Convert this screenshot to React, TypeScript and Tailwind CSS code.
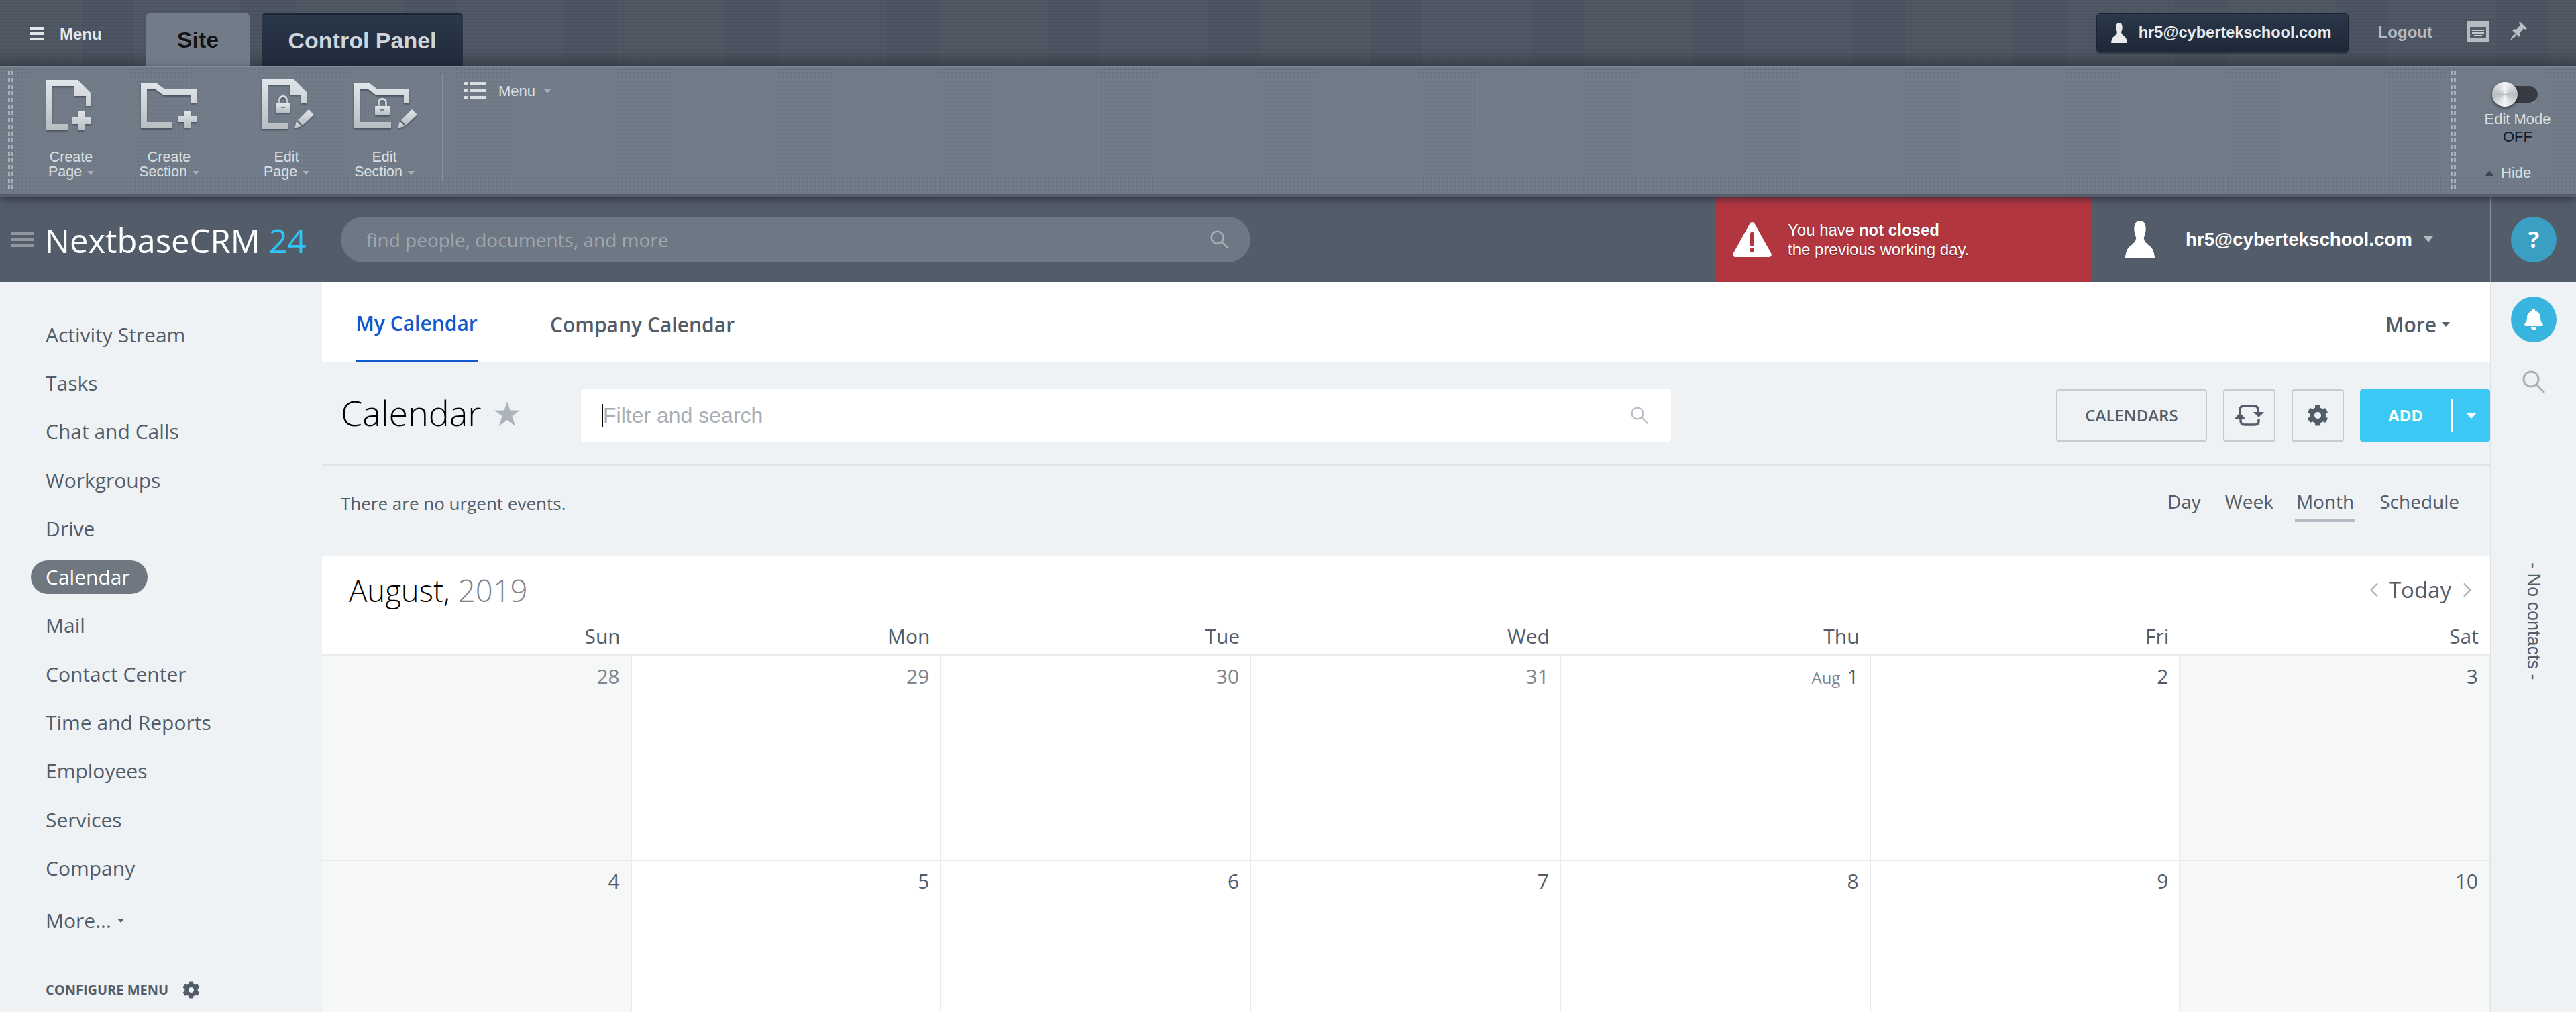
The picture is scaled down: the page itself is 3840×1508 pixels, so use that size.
import React from 'react';
import { FaBell, FaCog } from 'react-icons/fa';
import { ChevronLeft, ChevronRight } from 'lucide-react';

const sidebarItems = [
  'Activity Stream', 'Tasks', 'Chat and Calls', 'Workgroups', 'Drive', 'Calendar',
  'Mail', 'Contact Center', 'Time and Reports', 'Employees', 'Services', 'Company',
];

const weekDays = ['Sun', 'Mon', 'Tue', 'Wed', 'Thu', 'Fri', 'Sat'];

const weeks = [
  [{ d: '28', off: true }, { d: '29', off: true }, { d: '30', off: true }, { d: '31', off: true }, { d: '1', pre: 'Aug' }, { d: '2' }, { d: '3' }],
  [{ d: '4' }, { d: '5' }, { d: '6' }, { d: '7' }, { d: '8' }, { d: '9' }, { d: '10' }],
];

const Caret = ({ className }: { className: string }) => (
  <span className={`inline-block h-0 w-0 border-x-solid border-t-solid border-x-transparent ${className}`} />
);

const Grip = () => (
  <div className="h-[176px] w-[8px] bg-[repeating-linear-gradient(180deg,#aab1b8_0,#aab1b8_6px,transparent_6px,transparent_10px)] [mask-image:linear-gradient(90deg,#000_0,#000_3px,transparent_3px,transparent_5px,#000_5px)]" />
);

// thin magnifier, lens top-left and long handle, as in the reference
const Magnifier = ({ className }: { className: string }) => (
  <svg viewBox="0 0 34 34" className={className} fill="none" stroke="currentColor" strokeWidth="3">
    <circle cx="13" cy="13" r="11" />
    <path d="M21 21L33 33" />
  </svg>
);

const ToolIcon = ({ children }: { children: React.ReactNode }) => (
  <svg viewBox="0 0 100 80" className="h-[80px] w-[100px] overflow-visible">
    <defs>
      <linearGradient id="toolFill" x1="0" y1="0" x2="0" y2="1" gradientUnits="objectBoundingBox">
        <stop offset="0" stopColor="#e0e6e9" />
        <stop offset="1" stopColor="#b7bdc1" />
      </linearGradient>
    </defs>
    <g fill="url(#toolFill)" className="drop-shadow-[0_2px_1px_rgba(50,58,68,0.6)]">{children}</g>
  </svg>
);

const Lock = ({ x, y }: { x: number; y: number }) => (
  <g transform={`translate(${x} ${y})`}>
    <path d="M-7 -3V-8a7 7 0 0 1 14 0V-3H4V-8a4 4 0 0 0-8 0V-3Z" />
    <path d="M-10 -3H10a1 1 0 0 1 1 1V9a2 2 0 0 1-2 2H-9a2 2 0 0 1-2-2V-2a1 1 0 0 1 1-1Z" />
    <rect x="-3" y="2" width="6" height="2" fill="#7a828c" />
  </g>
);

const Pencil = ({ x, y }: { x: number; y: number }) => (
  <g transform={`translate(${x} ${y})`}>
    <path d="M0 0L3 -10L10 -3Z" />
    <path d="M5 -12L21 -28L29 -20L12 -4Z" />
  </g>
);

const PAGE_D = 'M0 0H47L67 20V39H59V24H42V9H9V66H32V75H0Z';
const FOLDER_D = 'M0 0H24L36 9H83V30H75V18H34L22 9H9V58H47V67H0Z';

const tools = [
  {
    label: 'Create', sub: 'Page', icon: (
      <g transform="translate(13 2)">
        <path d={PAGE_D} />
        <path d="M47 47H57V56H67V66H57V75H47V66H39V56H47Z" />
      </g>
    ),
  },
  {
    label: 'Create', sub: 'Section', icon: (
      <g transform="translate(8 7)">
        <path d={FOLDER_D} />
        <path d="M64 42H74V49H83V58H74V66H64V58H55V49H64Z" />
      </g>
    ),
  },
  {
    label: 'Edit', sub: 'Page', icon: (
      <g transform="translate(13 0)">
        <path d="M0 0H47L67 20V37H59V24H42V9H9V66H39V75H0Z" />
        <Lock x={32} y={40} />
        <Pencil x={49} y={74} />
      </g>
    ),
  },
  {
    label: 'Edit', sub: 'Section', icon: (
      <g transform="translate(4 7)">
        <path d="M0 0H24L36 9H83V30H75V18H34L22 9H9V58H56V67H0Z" />
        <Lock x={43} y={37} />
        <Pencil x={66} y={67} />
      </g>
    ),
  },
];

const UserShape = ({ className }: { className: string }) => (
  <svg viewBox="0 0 46 58" className={className} fill="currentColor">
    <path d="M23 0C16 0 14 6 14 13C14 19 16 23 17 26C17 31 14 34 9 38C3 42 1 48 0 58H46C45 48 43 42 37 38C32 34 29 31 29 26C30 23 32 19 32 13C32 6 30 0 23 0Z" />
  </svg>
);

const TopBar = () => (
  <div className="relative flex h-[98px] shrink-0 items-stretch bg-[#4c5561] bg-[linear-gradient(180deg,transparent_75%,rgba(20,26,34,0.28)_100%),repeating-linear-gradient(90deg,rgba(255,255,255,0.03)_0,rgba(255,255,255,0.03)_1px,transparent_1px,transparent_3px),repeating-linear-gradient(0deg,rgba(0,0,0,0.07)_0,rgba(0,0,0,0.07)_1px,transparent_1px,transparent_4px)] font-['Liberation_Sans',Arial,sans-serif]">
    <div className="flex w-[218px] items-start pl-[44px] pt-[37px]">
      <div className="mt-[3px] flex h-[20px] w-[22px] flex-col justify-between">
        <span className="h-[4px] bg-[#e4e7e9]" />
        <span className="h-[4px] bg-[#e4e7e9]" />
        <span className="h-[4px] bg-[#e4e7e9]" />
      </div>
      <span className="ml-[23px] text-[24px] leading-[28px] font-bold text-[#e4e7e9]">Menu</span>
    </div>
    <div className="mt-[20px] flex w-[154px] items-center justify-center rounded-t-[5px] bg-[#727c89] text-[34px] font-bold text-[#111417] [text-shadow:0_1px_1px_rgba(255,255,255,0.25)]">
      Site
    </div>
    <div className="ml-[18px] mt-[20px] flex w-[300px] items-center justify-center rounded-t-[5px] border-t-2 border-[#1a2432] bg-gradient-to-b from-[#2b384b] to-[#1f2a3a] text-[34px] font-bold text-[#d0d5d9]">
      Control Panel
    </div>
    <div className="ml-auto mr-[72px] flex items-start pt-[20px]">
      <div className="flex h-[58px] w-[376px] items-center rounded-[5px] border border-[#1a2330] bg-gradient-to-b from-[#2b384b] to-[#1d2837] pl-[21px] shadow-[0_2px_2px_rgba(0,0,0,0.35)]">
        <UserShape className="h-[30px] w-[24px] text-[#e7ebee]" />
        <span className="ml-[17px] text-[23.6px] font-bold text-[#e7ebee]">hr5@cybertekschool.com</span>
      </div>
      <span className="ml-[44px] mt-[14px] text-[24px] leading-[28px] font-bold text-[#b4bac0]">Logout</span>
      <div className="ml-[52px] mt-[12px] flex h-[30px] w-[32px] flex-col justify-end bg-[#b5bbc0] px-[4px] pb-[5px]">
        <div className="flex h-[17px] flex-col justify-center gap-[2px] bg-[#565d67] px-[3px]">
          <span className="h-[2px] bg-[#c5cace]" />
          <span className="h-[2px] bg-[#c5cace]" />
          <span className="mx-[3px] h-[2px] bg-[#c5cace]" />
        </div>
      </div>
      <svg viewBox="0 0 28 30" className="ml-[30px] mt-[11px] h-[30px] w-[28px]" fill="#b9bfc4">
        <path d="M16 1L27 11L24 13L22 11L16 18C17 21 16 23 15 24L5 14C7 12 9 12 11 13L17 6L15 4Z" />
        <path d="M8 19L11 22L1 30Z" />
      </svg>
    </div>
  </div>
);

const Ribbon = () => (
  <div className="relative z-10 flex h-[195px] shrink-0 border-t-2 border-b-[4px] border-t-[#808a96] border-b-[#555e6a] bg-[#727c89] bg-[radial-gradient(rgba(60,68,78,0.18)_1px,transparent_1px)] bg-[length:6px_6px] shadow-[0_4px_10px_rgba(30,36,44,0.65)] font-['Liberation_Sans',Arial,sans-serif]">
    <div className="ml-[12px] mt-[6px]">
      <Grip />
    </div>
    <div className="flex">
      {tools.map((t, i) => (
        <React.Fragment key={t.label + t.sub}>
          <div className={`flex w-[146px] flex-col items-center ${i === 0 ? 'ml-[13px]' : ''} ${i === 2 ? 'ml-[15px]' : ''}`}>
            <div className="mt-[17px] h-[80px] w-[100px]">
              <ToolIcon>{t.icon}</ToolIcon>
            </div>
            <div className="mt-[26px] text-center text-[21.5px] leading-[22px] text-[#d9e0e4]">
              <div>{t.label}</div>
              <div className="flex items-center justify-center">
                {t.sub}
                <Caret className="ml-[8px] mt-[3px] border-x-[5px] border-t-[6px] border-t-[#a7aeb5]" />
              </div>
            </div>
          </div>
          {i % 2 === 1 && <div className="ml-[13px] mt-[12px] h-[158px] w-[1px] bg-[#8a929c]" />}
        </React.Fragment>
      ))}
      <div className="ml-[32px] mt-[21px] flex items-start">
        <div className="mt-[1px] grid h-[26px] w-[32px] grid-cols-[6px_1fr] gap-x-[3px] gap-y-[5px]">
          <span className="h-[5px] bg-[#d8dee2]" /><span className="h-[5px] bg-[#d8dee2]" />
          <span className="h-[5px] bg-[#d8dee2]" /><span className="h-[5px] bg-[#d8dee2]" />
          <span className="h-[5px] bg-[#d8dee2]" /><span className="h-[5px] bg-[#d8dee2]" />
        </div>
        <span className="ml-[19px] text-[22px] leading-[30px] text-[#d9e0e4]">Menu</span>
        <Caret className="ml-[13px] mt-[12px] border-x-[5px] border-t-[6px] border-t-[#a7aeb5]" />
      </div>
    </div>
    <div className="ml-auto mt-[6px]">
      <Grip />
    </div>
    <div className="ml-[41px] mr-[36px] flex w-[102px] flex-col items-center">
      <div className="relative ml-[15px] mt-[28px] h-[26px] w-[66px] self-start rounded-full border-b border-[#aab1b8] bg-[#363b44]">
        <div className="absolute -left-[2px] -top-[6px] h-[37px] w-[38px] rounded-full bg-[conic-gradient(#f4f5f5,#b9bdc1,#f4f5f5,#b9bdc1,#f4f5f5)] shadow-[0_2px_4px_rgba(0,0,0,0.55)]" />
      </div>
      <div className="mt-[11px] whitespace-nowrap text-[22px] leading-[26px] text-[#d9e0e4]">Edit Mode</div>
      <div className="text-[22px] leading-[26px] text-[#101a28]">OFF</div>
      <div className="mt-[28px] flex items-center self-start pl-[2px]">
        <span className="h-0 w-0 border-x-[7px] border-b-[9px] border-x-transparent border-b-[#3f4651]" />
        <span className="ml-[10px] text-[22px] leading-[26px] text-[#d9e0e4]">Hide</span>
      </div>
    </div>
  </div>
);

const Header = () => (
  <div className="flex h-[127px] shrink-0 items-center bg-[#535c69]">
    <div className="ml-[17px] flex h-[23px] w-[33px] flex-col justify-between">
      <span className="h-[5px] bg-[#8f969f]" />
      <span className="h-[5px] bg-[#8f969f]" />
      <span className="h-[5px] bg-[#8f969f]" />
    </div>
    <div className="ml-[17px] mt-[3px] w-[441px] whitespace-nowrap text-[49px] font-medium leading-none text-white">
      NextbaseCRM <span className="text-[#2fc6f6]">24</span>
    </div>
    <div className="flex h-[68px] w-[1356px] items-center rounded-full bg-[#6e7884] pl-[38px] pr-[32px]">
      <span className="text-[28px] text-[#a0a7af]">find people, documents, and more</span>
      <Magnifier className="ml-auto h-[28px] w-[28px] text-[#a9afb6]" />
    </div>
    <div className="ml-[694px] flex h-full w-[560px] items-center bg-[#b13640] pl-[25px] font-['Liberation_Sans',Arial,sans-serif] text-[24px] leading-[29px] text-white [text-shadow:0_1px_1px_rgba(0,0,0,0.35)]">
      <svg viewBox="0 0 58 52" className="h-[52px] w-[58px]">
        <path d="M29 0C31 0 32 1 33 3L57 46C59 49 57 52 54 52H4C1 52 -1 49 1 46L25 3C26 1 27 0 29 0Z" fill="#fff" />
        <rect x="26" y="15" width="6" height="21" rx="2" fill="#b13640" />
        <rect x="26" y="39" width="6" height="6" rx="1" fill="#b13640" />
      </svg>
      <div className="ml-[24px]">
        <div>You have <b>not closed</b></div>
        <div>the previous working day.</div>
      </div>
    </div>
    <UserShape className="ml-[49px] h-[56px] w-[46px] text-white" />
    <span className="ml-[45px] font-['Liberation_Sans',Arial,sans-serif] text-[27.7px] font-bold text-white">hr5@cybertekschool.com</span>
    <Caret className="ml-[17px] border-x-[7px] border-t-[9px] border-t-[#b5bac0]" />
    <div className="ml-auto flex h-full w-[128px] items-center justify-center border-l-2 border-[#8a929b]">
      <div className="flex h-[68px] w-[68px] items-center justify-center rounded-full bg-[#3b9fc4] text-[34px] font-bold text-white">?</div>
    </div>
  </div>
);

const Sidebar = () => (
  <div className="flex w-[480px] shrink-0 flex-col bg-[#eef2f4] pt-[42px] text-[30px] text-[#535c69]">
    {sidebarItems.map((item) => (
      <div key={item} className="flex h-[72.3px] items-center">
        {item === 'Calendar' ? (
          <span className="ml-[46px] flex h-[50px] w-[174px] items-center rounded-full bg-[#6f7780] pl-[22px] font-medium text-white">{item}</span>
        ) : (
          <span className="ml-[68px]">{item}</span>
        )}
      </div>
    ))}
    <div className="ml-[68px] mt-[6px] flex h-[72px] items-center">
      More...
      <Caret className="ml-[9px] border-x-[5px] border-t-[6px] border-t-[#535c69]" />
    </div>
    <div className="ml-[68px] mt-[53px] flex items-center text-[20px] font-bold leading-[28px]">
      CONFIGURE MENU
      <FaCog className="ml-[21px] h-[26px] w-[26px]" />
    </div>
  </div>
);

const Toolbar = () => (
  <div className="flex h-[155px] shrink-0 items-start border-b-[3px] border-[#e2e5e8] bg-[#eef2f4] pl-[28px] pt-[40px]">
    <h1 className="w-[229px] text-[52px] leading-[70px] font-light text-black">Calendar</h1>
    <svg viewBox="0 0 38 37" className="mt-[18px] h-[37px] w-[38px]" fill="#adb3ba">
      <path d="M19 0L23.5 13.5H38L26.5 22L31 37L19 28L7 37L11.5 22L0 13.5H14.5Z" />
    </svg>
    <div className="ml-[91px] flex h-[78px] w-[1625px] items-center rounded-[3px] bg-white pl-[31px] pr-[34px]">
      <span className="h-[34px] w-[2px] bg-black" />
      <span className="font-['Liberation_Sans',Arial,sans-serif] text-[32px] text-[#a8adb4]">Filter and search</span>
      <Magnifier className="ml-auto h-[26px] w-[26px] text-[#b7bcc2]" />
    </div>
    <button className="ml-auto flex h-[78px] w-[225px] items-center justify-center rounded-[4px] border-2 border-[#c6cbd0] text-[24px] font-semibold text-[#535c69]">
      CALENDARS
    </button>
    <button className="ml-[24px] flex h-[78px] w-[78px] items-center justify-center rounded-[4px] border-2 border-[#c6cbd0]">
      <svg viewBox="0 0 44 32" className="h-[32px] w-[44px]" fill="none" stroke="#535c69" strokeWidth="3.4">
        <path d="M8 13V8C8 4 10 2 14 2H29C33 2 35 4 35 8V12" />
        <path d="M36 21V25C36 28 34 30 30 30H15C11 30 9 28 9 24V20" />
        <path d="M28 11H44L36 19Z" fill="#535c69" stroke="none" />
        <path d="M0 21H16L8 12Z" fill="#535c69" stroke="none" />
      </svg>
    </button>
    <button className="ml-[24px] flex h-[78px] w-[78px] items-center justify-center rounded-[4px] border-2 border-[#c6cbd0]">
      <FaCog className="h-[32px] w-[32px] text-[#535c69]" />
    </button>
    <button className="ml-[24px] flex h-[78px] w-[194px] items-center rounded-[4px] bg-[#3bc8f5] text-[24px] font-bold text-white">
      <span className="ml-[42px]">ADD</span>
      <span className="ml-[42px] h-[48px] w-[2px] bg-white" />
      <Caret className="ml-[20px] border-x-[8px] border-t-[9px] border-t-white" />
    </button>
  </div>
);

const ViewSwitch = () => (
  <div className="flex h-[134px] shrink-0 items-start bg-[#eef2f4] pl-[28px] pr-[46px] text-[#535c69]">
    <span className="mt-[35px] text-[26px] leading-[40px]">There are no urgent events.</span>
    <div className="ml-auto mt-[31px] flex gap-[36px] text-[28px] leading-[42px]">
      <span>Day</span>
      <span className="-mr-[4px]">Week</span>
      <span className="h-[52px] border-b-4 border-[#b4bac4] px-[2px]">Month</span>
      <span>Schedule</span>
    </div>
  </div>
);

const CalendarGrid = () => (
  <div className="min-h-0 flex-1 overflow-hidden bg-white">
    <div className="flex h-[100px] items-center pl-[40px] pr-[16px]">
      <span className="text-[45.5px] font-light text-black">August, <span className="text-[#80868e]">2019</span></span>
      <ChevronLeft className="ml-auto h-[36px] w-[36px] text-[#a3a9b0]" strokeWidth={1.4} />
      <span className="ml-[4px] text-[33px] text-[#535c69]">Today</span>
      <ChevronRight className="ml-[6px] h-[36px] w-[36px] text-[#a3a9b0]" strokeWidth={1.4} />
    </div>
    <div className="grid h-[49px] grid-cols-7 border-b-[3px] border-[#e8eaec] text-[30px] text-[#535c69]">
      {weekDays.map((w) => (
        <div key={w} className="pr-[17px] text-right leading-[38px]">{w}</div>
      ))}
    </div>
    {weeks.map((week, i) => (
      <div key={i} className="grid h-[305px] grid-cols-7 border-b-[2px] border-[#e9ebed] text-[30px]">
        {week.map((c, j) => (
          <div
            key={c.d}
            className={`border-r-2 border-[#e9ebed] pr-[16px] pt-[10px] text-right leading-[40px] ${j === 0 || j === 6 ? 'bg-[#f6f8f8]' : ''} ${c.off ? 'text-[#80868e]' : 'text-[#535c69]'}`}
          >
            {c.pre && <span className="mr-[10px] text-[24px] text-[#80868e]">{c.pre}</span>}
            {c.d}
          </div>
        ))}
      </div>
    ))}
  </div>
);

const RightRail = () => (
  <div className="flex w-[128px] shrink-0 flex-col items-center border-l-2 border-[#e0e3e6] bg-[#eef2f4]">
    <div className="mt-[22px] flex h-[68px] w-[68px] items-center justify-center rounded-full bg-[#38b5de]">
      <FaBell className="h-[32px] w-[32px] text-white" />
    </div>
    <Magnifier className="mt-[42px] h-[34px] w-[34px] text-[#a9afb5]" />
    <span className="mt-[252px] whitespace-nowrap font-['Liberation_Sans',Arial,sans-serif] text-[27px] leading-[32px] text-[#535c69] [writing-mode:vertical-rl]">- No contacts -</span>
  </div>
);

export default function App() {
  return (
    <div className="flex h-[1508px] w-full flex-col overflow-hidden font-['Open_Sans',sans-serif]">
      <TopBar />
      <Ribbon />
      <Header />
      <div className="flex min-h-0 flex-1">
        <Sidebar />
        <div className="flex min-w-0 flex-1 flex-col">
          <div className="flex h-[120px] shrink-0 items-stretch bg-white pl-[50px] pr-[60px] text-[30px]">
            <span className="flex w-[182px] items-center justify-center border-b-4 border-[#1058d0] pt-[6px] font-semibold text-[#1058d0]">My Calendar</span>
            <span className="ml-[108px] flex items-center pt-[6px] font-semibold text-[#535c69]">Company Calendar</span>
            <span className="ml-auto flex items-center pt-[6px] font-semibold text-[#535c69]">
              More
              <Caret className="ml-[8px] border-x-[6px] border-t-[7px] border-t-[#535c69]" />
            </span>
          </div>
          <Toolbar />
          <ViewSwitch />
          <CalendarGrid />
        </div>
        <RightRail />
      </div>
    </div>
  );
}
